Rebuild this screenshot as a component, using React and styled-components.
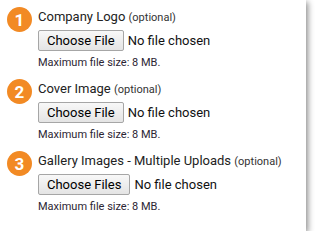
import React from 'react';
import styled, { createGlobalStyle } from 'styled-components';

const Global = createGlobalStyle`
    body {
        margin: 0;
        background: #fff;
        font-family: Roboto, "Liberation Sans", Arial, sans-serif;
    }
`

const Card = styled.div`
    width: 306px;
    height: 231px;
    box-sizing: border-box;
    background: #fff;
    box-shadow: 2px 2px 6px rgba(0, 0, 0, 0.45);
    padding: 7px 0 0 7px;
    display: flex;
    flex-direction: column;
    gap: 9px;
`

const Section = styled.div`
    display: flex;
    align-items: flex-start;
    gap: 6px;
`

const Badge = styled.div`
    width: 25px;
    height: 25px;
    border-radius: 50%;
    background: #f28a24;
    color: #fff;
    font-weight: 700;
    font-size: 17px;
    display: flex;
    align-items: center;
    justify-content: center;
    flex-shrink: 0;
`

const Body = styled.div`
    display: flex;
    flex-direction: column;
`

const Title = styled.div`
    height: 20px;
    font-size: 13px;
    line-height: 20px;
    color: #222;
    white-space: nowrap;
    & small {
        font-size: 11px;
        line-height: 1;
        color: #333;
    }
`

const FileRow = styled.div`
    display: flex;
    align-items: center;
    gap: 4px;
    margin-top: 3px;
    font-size: 13px;
    color: #111;
`

const FileButton = styled.button`
    font-family: inherit;
    font-size: 13px;
    color: #000;
    height: 21px;
    padding: 0 8px;
    border: 1px solid #a6a6a6;
    border-radius: 2px;
    background: linear-gradient(#f8f8f8, #e4e4e4);
    line-height: 19px;
`

const Hint = styled.div`
    margin-top: 5px;
    font-size: 11px;
    line-height: 14px;
    color: #2c2533;
`

const fields = [
    { n: 1, label: 'Company Logo', button: 'Choose File' },
    { n: 2, label: 'Cover Image', button: 'Choose File' },
    { n: 3, label: 'Gallery Images - Multiple Uploads', button: 'Choose Files' },
];

function App() {
    return (
        <>
            <Global />
            <Card>
                {fields.map(f => (
                    <Section key={f.n}>
                        <Badge>{f.n}</Badge>
                        <Body>
                            <Title>{f.label} <small>(optional)</small></Title>
                            <FileRow>
                                <FileButton>{f.button}</FileButton>
                                <span>No file chosen</span>
                            </FileRow>
                            <Hint>Maximum file size: 8 MB.</Hint>
                        </Body>
                    </Section>
                ))}
            </Card>
        </>
    );
}

export default App;
